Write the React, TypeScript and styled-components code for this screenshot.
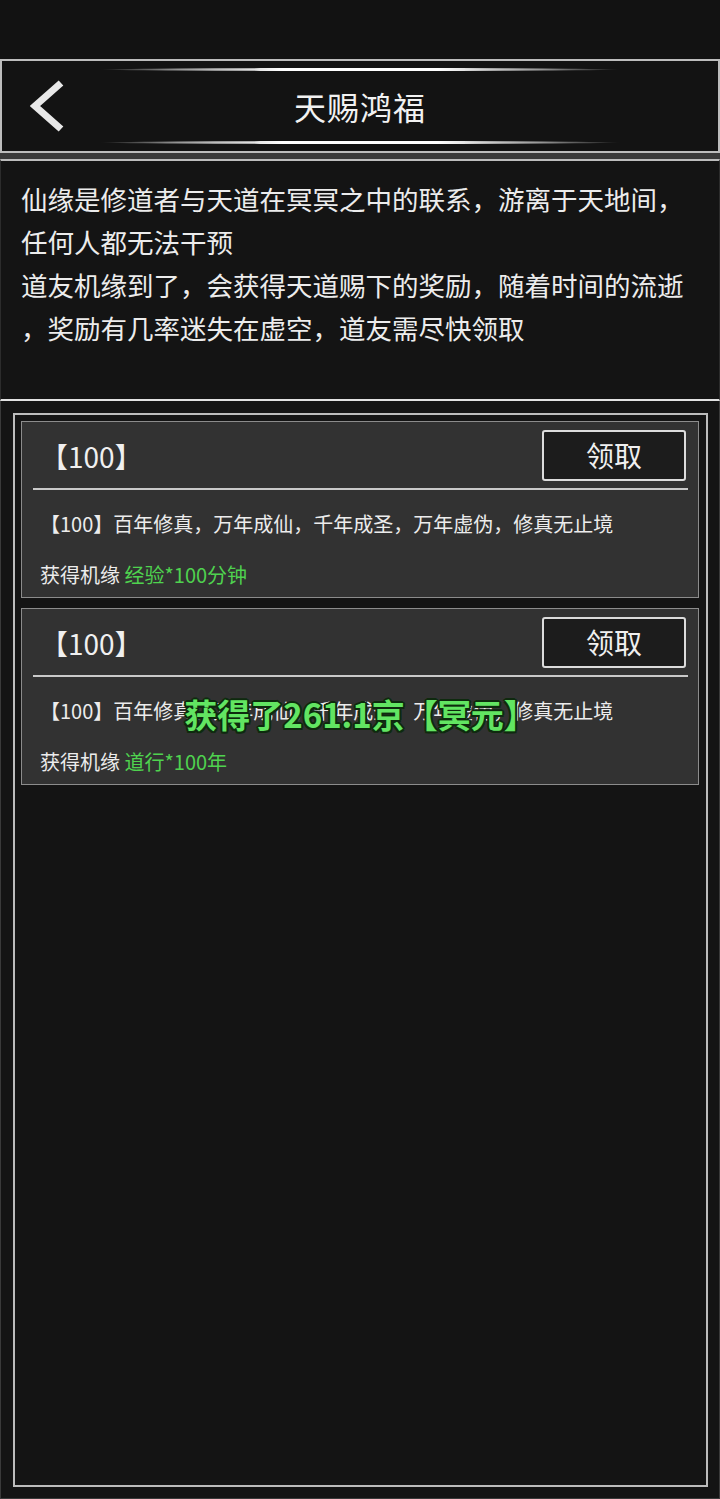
import React from 'react';
import styled, { createGlobalStyle } from 'styled-components';

const GlobalStyle = createGlobalStyle`
  html, body, #root {
    margin: 0;
    padding: 0;
    height: 100%;
  }
  body {
    background: #141414;
    font-family: 'Noto Sans CJK SC', 'Noto Sans', sans-serif;
    color: #ececec;
  }
  * {
    box-sizing: border-box;
  }
`;

const introLines = [
  '仙缘是修道者与天道在冥冥之中的联系，游离于天地间，',
  '任何人都无法干预',
  '道友机缘到了，会获得天道赐下的奖励，随着时间的流逝',
  '，奖励有几率迷失在虚空，道友需尽快领取',
];

const rewards = [
  {
    tag: '【100】',
    text: '【100】百年修真，万年成仙，千年成圣，万年虚伪，修真无止境',
    gift: '经验*100分钟',
  },
  {
    tag: '【100】',
    text: '【100】百年修真，万年成仙，千年成圣，万年虚伪，修真无止境',
    gift: '道行*100年',
  },
];

export default function App() {
  return (
    <>
      <GlobalStyle />
      <Page>
        <StatusBar />
        <Header>
          <DecoLine />
          <TitleRow>
            <BackButton aria-label="返回">
              <svg width="34" height="52" viewBox="0 0 34 52">
                <polyline
                  points="31,3 5,26 31,49"
                  fill="none"
                  stroke="#e8e8e8"
                  strokeWidth="7"
                />
              </svg>
            </BackButton>
            <Title>天赐鸿福</Title>
            <span />
          </TitleRow>
          <DecoLine />
        </Header>
        <Band />
        <Intro>
          {introLines.map((line, i) => (
            <IntroLine key={i}>{line}</IntroLine>
          ))}
        </Intro>
        <ListBox>
          <Panel>
            {rewards.map((r, i) => (
              <Card key={i}>
                <CardHead>
                  <CardTag>{r.tag}</CardTag>
                  <ClaimButton>领取</ClaimButton>
                </CardHead>
                <CardBody>
                  <CardText>{r.text}</CardText>
                  <GiftLine>
                    获得机缘 <Green>{r.gift}</Green>
                  </GiftLine>
                </CardBody>
              </Card>
            ))}
            <Toast>获得了261.1京【冥元】</Toast>
          </Panel>
        </ListBox>
      </Page>
    </>
  );
}

const Page = styled.div`
  height: 100vh;
  display: flex;
  flex-direction: column;
`;

const StatusBar = styled.div`
  height: 59px;
  background: #121212;
  flex-shrink: 0;
`;

const Header = styled.div`
  height: 94px;
  flex-shrink: 0;
  border: 2px solid #bdbdbd;
  background: #131313;
  display: flex;
  flex-direction: column;
  align-items: center;
  padding-top: 7px;
`;

const DecoLine = styled.div`
  width: 520px;
  height: 3px;
  border-radius: 50%;
  background: linear-gradient(
    90deg,
    rgba(255, 255, 255, 0) 0%,
    rgba(255, 255, 255, 0.55) 15%,
    #ffffff 35%,
    #ffffff 65%,
    rgba(255, 255, 255, 0.55) 85%,
    rgba(255, 255, 255, 0) 100%
  );
`;

const TitleRow = styled.div`
  width: 100%;
  height: 70px;
  display: grid;
  grid-template-columns: 1fr auto 1fr;
  align-items: center;
`;

const BackButton = styled.div`
  padding-left: 28px;
  display: flex;
  align-items: center;
  cursor: pointer;
`;

const Title = styled.div`
  font-size: 32px;
  color: #f2f2f2;
  letter-spacing: 1px;
`;

const Band = styled.div`
  height: 6px;
  background: #3a3a3a;
  flex-shrink: 0;
`;

const Intro = styled.div`
  height: 242px;
  flex-shrink: 0;
  border-top: 2px solid #bdbdbd;
  border-bottom: 2px solid #e2e2e2;
  border-left: 1px solid #2c2c2c;
  border-right: 1px solid #2c2c2c;
  padding: 16px 0 0 20px;
`;

const IntroLine = styled.div`
  font-size: 26.5px;
  line-height: 43px;
  color: #ececec;
  white-space: nowrap;
`;

const ListBox = styled.div`
  flex: 1;
  display: flex;
  border: 1px solid #3a3a3a;
  border-top: none;
  padding: 12px 11px 11px 12px;
`;

const Panel = styled.div`
  flex: 1;
  position: relative;
  border: 2px solid #bcbcbc;
  padding: 6px 7px 6px 6px;
  display: flex;
  flex-direction: column;
  gap: 10px;
`;

const Card = styled.div`
  background: #323232;
  border: 1px solid #8c8c8c;
  height: 177px;
`;

const CardHead = styled.div`
  height: 68px;
  margin: 0 10px 0 11px;
  padding: 0 2px 0 7px;
  border-bottom: 2px solid #c9c9c9;
  display: flex;
  align-items: center;
  justify-content: space-between;
`;

const CardTag = styled.div`
  font-size: 28px;
  color: #f0f0f0;
  margin-top: 2px;
`;

const ClaimButton = styled.div`
  width: 144px;
  height: 51px;
  border: 2px solid #dcdcdc;
  border-radius: 3px;
  background: #1c1c1c;
  color: #f0f0f0;
  font-size: 28px;
  display: flex;
  align-items: center;
  justify-content: center;
  cursor: pointer;
`;

const CardBody = styled.div`
  padding: 19px 18px 7px;
`;

const CardText = styled.div`
  font-size: 20px;
  line-height: 30px;
  color: #ececec;
  white-space: nowrap;
`;

const GiftLine = styled.div`
  margin-top: 21px;
  font-size: 20px;
  line-height: 30px;
  color: #ececec;
`;

const Green = styled.span`
  color: #4fd24f;
`;

const Toast = styled.div`
  position: absolute;
  left: 0;
  right: 0;
  top: 279px;
  text-align: center;
  font-size: 33px;
  font-weight: 700;
  line-height: 40px;
  color: #62e562;
  white-space: nowrap;
  pointer-events: none;
  text-shadow:
    2px 0 0 #0e2a0e,
    -2px 0 0 #0e2a0e,
    0 2px 0 #0e2a0e,
    0 -2px 0 #0e2a0e,
    1.5px 1.5px 0 #0e2a0e,
    -1.5px 1.5px 0 #0e2a0e,
    1.5px -1.5px 0 #0e2a0e,
    -1.5px -1.5px 0 #0e2a0e;
`;
